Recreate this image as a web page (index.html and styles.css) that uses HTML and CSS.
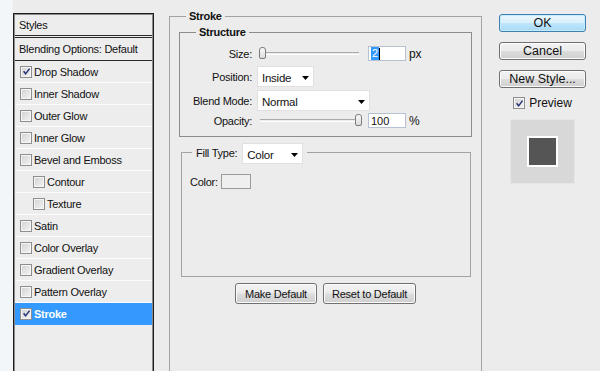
FILE: index.html
```html
<html>
	<head>
		<title>Layer Style</title>
<link rel="stylesheet" href="styles.css">
</head>
<body>
		<div id="DIALOG">

			<div class="edge"></div>

			<div class="styles-panel">
				<div class="panel-head">Styles</div>
				<div class="panel-blend">Blending Options: Default</div>
				<ul class="fx-list">
					<li class="fx"><span class="check"><svg viewBox="0 0 10 10"><path d="M1.8 4.8 L4 7.6 L8.4 1.8"/></svg></span>Drop Shadow</li>
					<li class="fx"><span class="check"></span>Inner Shadow</li>
					<li class="fx"><span class="check"></span>Outer Glow</li>
					<li class="fx"><span class="check"></span>Inner Glow</li>
					<li class="fx"><span class="check"></span>Bevel and Emboss</li>
					<li class="fx sub"><span class="check"></span>Contour</li>
					<li class="fx sub"><span class="check"></span>Texture</li>
					<li class="fx"><span class="check"></span>Satin</li>
					<li class="fx"><span class="check"></span>Color Overlay</li>
					<li class="fx"><span class="check"></span>Gradient Overlay</li>
					<li class="fx"><span class="check"></span>Pattern Overlay</li>
					<li class="fx selected"><span class="check"><svg viewBox="0 0 10 10"><path d="M1.8 4.8 L4 7.6 L8.4 1.8"/></svg></span>Stroke</li>
				</ul>
			</div>

			<div class="stroke-box">
				<div class="group-title">Stroke</div>

				<div class="structure">
					<div class="group-title">Structure</div>

					<div class="field size-row">
						<span class="label">Size:</span>
						<div class="slider"><div class="track"></div><div class="thumb thumb-min"></div></div>
						<div class="num"><span class="sel">2</span><span class="caret"></span></div>
						<span class="unit">px</span>
					</div>

					<div class="field pos-row">
						<span class="label">Position:</span>
						<div class="select pos-select">Inside<svg class="arrow" viewBox="0 0 7 4"><polygon points="0,0 7,0 3.5,4"/></svg></div>
					</div>

					<div class="field blend-row">
						<span class="label">Blend Mode:</span>
						<div class="select blend-select">Normal<svg class="arrow" viewBox="0 0 7 4"><polygon points="0,0 7,0 3.5,4"/></svg></div>
					</div>

					<div class="field opacity-row">
						<span class="label">Opacity:</span>
						<div class="slider"><div class="track"></div><div class="thumb thumb-max"></div></div>
						<div class="num">100</div>
						<span class="unit">%</span>
					</div>
				</div>

				<div class="fill">
					<div class="fill-title">
						<span>Fill Type:</span>
						<div class="select fill-select">Color<svg class="arrow" viewBox="0 0 7 4"><polygon points="0,0 7,0 3.5,4"/></svg></div>
					</div>
					<div class="color-row">
						<span>Color:</span>
						<div class="swatch"></div>
					</div>
				</div>

				<div class="defaults">
					<button class="btn def-btn">Make Default</button>
					<button class="btn reset-btn">Reset to Default</button>
				</div>
			</div>

			<div class="actions">
				<button class="btn big ok">OK</button>
				<button class="btn big">Cancel</button>
				<button class="btn big">New Style...</button>
				<div class="preview-check"><span class="check"><svg viewBox="0 0 10 10"><path d="M1.8 4.8 L4 7.6 L8.4 1.8"/></svg></span>Preview</div>
				<div class="preview"><div class="preview-square"></div></div>
			</div>

		</div>
	</body>
</html>
```

FILE: styles.css
```css
body{
	margin: 0;
	height: 371px;
	overflow: hidden;
	background: #ececec;
	font-family: "Liberation Sans", Arial, sans-serif;
	font-size: 11px;
	letter-spacing: -0.25px;
	color: #111;
}

#DIALOG{
	display: flex;
	align-items: flex-start;
	height: 371px;
}

.edge{
	width: 13px;
	align-self: stretch;
	background: #f3f6f9;
}

/* left list of effects */
.styles-panel{
	width: 141px;
	height: 358px;
	margin-top: 13px;
	box-sizing: border-box;
	border: 1px solid #1c1c1c;
	border-bottom: none;
	padding: 1px;
	box-shadow: inset 1px 1px 0 #8a8a8a, inset -1px 0 0 #8a8a8a;
	background: #ededed;
}

.panel-head{
	height: 20px;
	line-height: 20px;
	padding-left: 4px;
	border-bottom: 3px double #2a2a2a;
}

.panel-blend{
	height: 22px;
	line-height: 22px;
	padding-left: 4px;
	border-bottom: 1px solid #2a2a2a;
}

.fx-list{
	list-style: none;
	margin: 0;
	padding: 0;
}

.fx{
	display: flex;
	align-items: center;
	height: 21px;
	padding-left: 5px;
	border-bottom: 1px solid #fbfbfb;
}

.fx.sub{
	padding-left: 18px;
}

.fx.selected{
	background: #3399ff;
	color: #fff;
	font-weight: bold;
	border-bottom-color: #3399ff;
}

.check{
	display: inline-flex;
	align-items: center;
	justify-content: center;
	width: 12px;
	height: 12px;
	box-sizing: border-box;
	margin-right: 2px;
	border: 1px solid #8e8e8e;
	background: linear-gradient(135deg, #d2d2d2, #f4f4f4);
	box-shadow: inset 0 0 0 1px #f6f6f6;
}

.check svg{
	width: 9px;
	height: 9px;
	fill: none;
	stroke: #26357a;
	stroke-width: 1.7;
}

/* stroke group */
.stroke-box{
	width: 313px;
	height: 355px;
	margin-left: 15px;
	margin-top: 16px;
	box-sizing: border-box;
	border: 1px solid #a3a3a3;
	border-bottom: none;
}

.group-title{
	width: fit-content;
	margin: -7px 0 0 16px;
	padding: 0 3px;
	line-height: 13px;
	font-weight: bold;
	background: #ececec;
}

.structure{
	margin: 9px 9px 0 9px;
	padding-bottom: 8px;
	border: 1px solid #8c8c8c;
}

.field{
	display: flex;
	align-items: center;
}

.label{
	width: 72px;
	margin-right: 5px;
	text-align: right;
}

.size-row{
	height: 15px;
	margin-top: 7px;
}

.pos-row{
	height: 21px;
	margin-top: 5px;
}

.blend-row{
	height: 21px;
	margin-top: 3px;
}

.opacity-row{
	height: 15px;
	margin-top: 2px;
}

.slider{
	position: relative;
	width: 105px;
	height: 15px;
	display: flex;
	align-items: center;
}

.track{
	flex: 1;
	margin: 0 3px;
	height: 1px;
	border-top: 1px solid #a9a9a9;
	border-bottom: 1px solid #fff;
}

.thumb{
	position: absolute;
	top: 1px;
	width: 7px;
	height: 12px;
	box-sizing: border-box;
	border: 1px solid #7c7c7c;
	border-radius: 3px 3px 2px 2px;
	background: linear-gradient(#fafafa, #dcdcdc);
}

.thumb-min{
	left: 2px;
}

.thumb-max{
	left: 98px;
}

.num{
	display: flex;
	align-items: center;
	width: 38px;
	height: 15px;
	box-sizing: border-box;
	margin-left: 6px;
	padding-left: 2px;
	border: 1px solid #b4c2d3;
	background: #fff;
	letter-spacing: 0;
}

.sel{
	background: #3399ff;
	color: #fff;
	padding: 0 1px;
	line-height: 13px;
}

.caret{
	width: 1px;
	height: 12px;
	background: #000;
}

.unit{
	margin-left: 3px;
	font-size: 12px;
}

.select{
	display: flex;
	align-items: center;
	justify-content: space-between;
	height: 21px;
	box-sizing: border-box;
	padding: 2px 4px 0 4px;
	border: 1px solid #e0e0e0;
	background: #fff;
	font-size: 11.5px;
}

.arrow{
	width: 7px;
	height: 4px;
	fill: #000;
}

.pos-select{
	width: 57px;
}

.blend-select{
	width: 113px;
}

/* fill group */
.fill{
	height: 125px;
	box-sizing: border-box;
	margin: 15px 10px 0 11px;
	border: 1px solid #a3a3a3;
}

.fill-title{
	display: flex;
	align-items: center;
	width: fit-content;
	height: 21px;
	margin: -10px 0 0 10px;
	padding: 0 4px;
	background: #ececec;
}

.fill-title span{
	margin-top: -2px;
}

.fill-select{
	width: 61px;
	margin-left: 5px;
}

.color-row{
	display: flex;
	align-items: center;
	height: 15px;
	margin-top: 10px;
	padding-left: 8px;
}

.swatch{
	width: 30px;
	height: 15px;
	box-sizing: border-box;
	margin-left: 3px;
	border: 1px solid #9a9a9a;
	background: #efefef;
}

.defaults{
	display: flex;
	justify-content: center;
	gap: 6px;
	margin-top: 6px;
}

.btn{
	height: 21px;
	box-sizing: border-box;
	padding: 0;
	border: 1px solid #707070;
	border-radius: 3px;
	background: linear-gradient(#f3f3f3 0%, #ebebeb 48%, #dddddd 52%, #cfcfcf 100%);
	box-shadow: inset 0 0 0 1px #fcfcfc;
	font-family: "Liberation Sans", Arial, sans-serif;
	font-size: 11px;
	letter-spacing: -0.25px;
	color: #111;
}

.def-btn{
	width: 82px;
}

.reset-btn{
	width: 93px;
}

/* right column */
.actions{
	display: flex;
	flex-direction: column;
	align-items: center;
	width: 87px;
	margin-left: 17px;
	padding-top: 14px;
}

.btn.big{
	width: 87px;
	height: 18px;
	margin-bottom: 10px;
	font-size: 12.5px;
	letter-spacing: 0;
	line-height: 14px;
}

.btn.ok{
	border-color: #3c7fb1;
	background: linear-gradient(#eaf6fd 0%, #d9f0fc 48%, #bee6fd 52%, #a7d9f5 100%);
	box-shadow: inset 0 0 0 1px #c8ecfb;
}

.preview-check{
	display: flex;
	align-items: center;
	margin-top: -2px;
	font-size: 12px;
	letter-spacing: 0;
}

.preview-check .check{
	margin-right: 4px;
}

.preview{
	display: flex;
	align-items: center;
	justify-content: center;
	width: 65px;
	height: 65px;
	box-sizing: border-box;
	margin-top: 9px;
	border: 1px solid #e6e6e6;
	background: #d8d8d8;
}

.preview-square{
	width: 31px;
	height: 31px;
	box-sizing: border-box;
	border: 2px solid #fff;
	background: #555555;
}
```
